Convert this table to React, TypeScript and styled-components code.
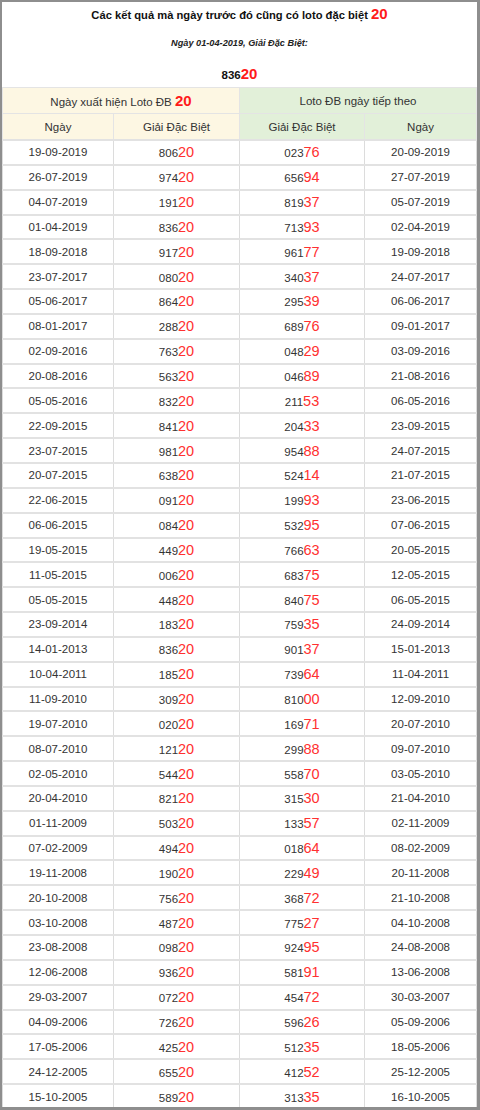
import React from 'react';
import styled, { createGlobalStyle } from 'styled-components';

// ngày xuất hiện, giải ĐB, giải ĐB ngày tiếp theo, ngày tiếp theo
const rows: [string, string, string, string][] = [
  ['19-09-2019', '80620', '02376', '20-09-2019'],
  ['26-07-2019', '97420', '65694', '27-07-2019'],
  ['04-07-2019', '19120', '81937', '05-07-2019'],
  ['01-04-2019', '83620', '71393', '02-04-2019'],
  ['18-09-2018', '91720', '96177', '19-09-2018'],
  ['23-07-2017', '08020', '34037', '24-07-2017'],
  ['05-06-2017', '86420', '29539', '06-06-2017'],
  ['08-01-2017', '28820', '68976', '09-01-2017'],
  ['02-09-2016', '76320', '04829', '03-09-2016'],
  ['20-08-2016', '56320', '04689', '21-08-2016'],
  ['05-05-2016', '83220', '21153', '06-05-2016'],
  ['22-09-2015', '84120', '20433', '23-09-2015'],
  ['23-07-2015', '98120', '95488', '24-07-2015'],
  ['20-07-2015', '63820', '52414', '21-07-2015'],
  ['22-06-2015', '09120', '19993', '23-06-2015'],
  ['06-06-2015', '08420', '53295', '07-06-2015'],
  ['19-05-2015', '44920', '76663', '20-05-2015'],
  ['11-05-2015', '00620', '68375', '12-05-2015'],
  ['05-05-2015', '44820', '84075', '06-05-2015'],
  ['23-09-2014', '18320', '75935', '24-09-2014'],
  ['14-01-2013', '83620', '90137', '15-01-2013'],
  ['10-04-2011', '18520', '73964', '11-04-2011'],
  ['11-09-2010', '30920', '81000', '12-09-2010'],
  ['19-07-2010', '02020', '16971', '20-07-2010'],
  ['08-07-2010', '12120', '29988', '09-07-2010'],
  ['02-05-2010', '54420', '55870', '03-05-2010'],
  ['20-04-2010', '82120', '31530', '21-04-2010'],
  ['01-11-2009', '50320', '13357', '02-11-2009'],
  ['07-02-2009', '49420', '01864', '08-02-2009'],
  ['19-11-2008', '19020', '22949', '20-11-2008'],
  ['20-10-2008', '75620', '36872', '21-10-2008'],
  ['03-10-2008', '48720', '77527', '04-10-2008'],
  ['23-08-2008', '09820', '92495', '24-08-2008'],
  ['12-06-2008', '93620', '58191', '13-06-2008'],
  ['29-03-2007', '07220', '45472', '30-03-2007'],
  ['04-09-2006', '72620', '59626', '05-09-2006'],
  ['17-05-2006', '42520', '51235', '18-05-2006'],
  ['24-12-2005', '65520', '41252', '25-12-2005'],
  ['15-10-2005', '58920', '31335', '16-10-2005'],
];

const Loto: React.FC<{ value: string }> = ({ value }) => (
  <>
    {value.slice(0, 3)}
    <Red>{value.slice(3)}</Red>
  </>
);

export default function App() {
  return (
    <>
      <GlobalStyle />
      <Frame>
        <Intro>
          <Title>
            Các kết quả mà ngày trước đó cũng có loto đặc biệt <BoldRed>20</BoldRed>
          </Title>
          <Subtitle>Ngày 01-04-2019, Giải Đặc Biệt:</Subtitle>
          <Special>
            836<BoldRed>20</BoldRed>
          </Special>
        </Intro>
        <Table>
          <colgroup>
            <col style={{ width: 111 }} />
            <col style={{ width: 126 }} />
            <col style={{ width: 125 }} />
            <col />
          </colgroup>
          <thead>
            <tr>
              <HeadCell colSpan={2} $tone="cream">
                Ngày xuất hiện Loto ĐB <BoldRed>20</BoldRed>
              </HeadCell>
              <HeadCell colSpan={2} $tone="green">
                Loto ĐB ngày tiếp theo
              </HeadCell>
            </tr>
            <tr>
              <HeadCell $tone="cream">Ngày</HeadCell>
              <HeadCell $tone="cream">Giải Đặc Biệt</HeadCell>
              <HeadCell $tone="green">Giải Đặc Biệt</HeadCell>
              <HeadCell $tone="green">Ngày</HeadCell>
            </tr>
          </thead>
          <tbody>
            {rows.map(([day, prize, nextPrize, nextDay]) => (
              <Row key={day}>
                <Cell>{day}</Cell>
                <Cell>
                  <Loto value={prize} />
                </Cell>
                <Cell>
                  <Loto value={nextPrize} />
                </Cell>
                <Cell>{nextDay}</Cell>
              </Row>
            ))}
          </tbody>
        </Table>
      </Frame>
    </>
  );
}

const GlobalStyle = createGlobalStyle`
  html, body {
    margin: 0;
    padding: 0;
    background: #fff;
  }
  body {
    font-family: "Liberation Sans", Arial, sans-serif;
    color: #333;
  }
`;

const Frame = styled.div`
  box-sizing: border-box;
  width: 480px;
  height: 1110px;
  border: 2px solid #8e8e8e;
  border-right-width: 3px;
  border-bottom-width: 3px;
  background: #fff;
  overflow: hidden;
`;

const Intro = styled.div`
  display: flex;
  flex-direction: column;
  align-items: center;
  height: 85px;
  color: #111;
`;

const Title = styled.div`
  height: 24px;
  line-height: 24px;
  font-size: 11.2px;
  font-weight: bold;
`;

const Subtitle = styled.div`
  margin-top: 5px;
  height: 24px;
  line-height: 24px;
  font-size: 9.2px;
  font-style: italic;
  font-weight: bold;
  color: #222;
`;

const Special = styled.div`
  margin-top: 7px;
  height: 24px;
  line-height: 24px;
  font-size: 11.5px;
  font-weight: bold;
`;

const Red = styled.span`
  color: #ff3030;
  font-size: 14.5px;
`;

const BoldRed = styled.span`
  color: #ff1a1a;
  font-size: 15px;
  font-weight: bold;
`;

const Table = styled.table`
  width: 100%;
  table-layout: fixed;
  border-collapse: collapse;
  font-size: 11.5px;
  color: #333;
`;

const HeadCell = styled.th<{ $tone: 'cream' | 'green' }>`
  height: 25px;
  padding: 0;
  font-weight: normal;
  text-align: center;
  border: 1px solid #e4e4e4;
  background: ${(p) => (p.$tone === 'cream' ? '#fdf7e3' : '#e2f0d9')};
`;

const Row = styled.tr`
  height: 24.85px;
`;

const Cell = styled.td`
  padding: 0;
  text-align: center;
  border: 1px solid #dcdcdc;
  border-top-width: 2px;
  border-top-color: #e2e2e2;
`;
